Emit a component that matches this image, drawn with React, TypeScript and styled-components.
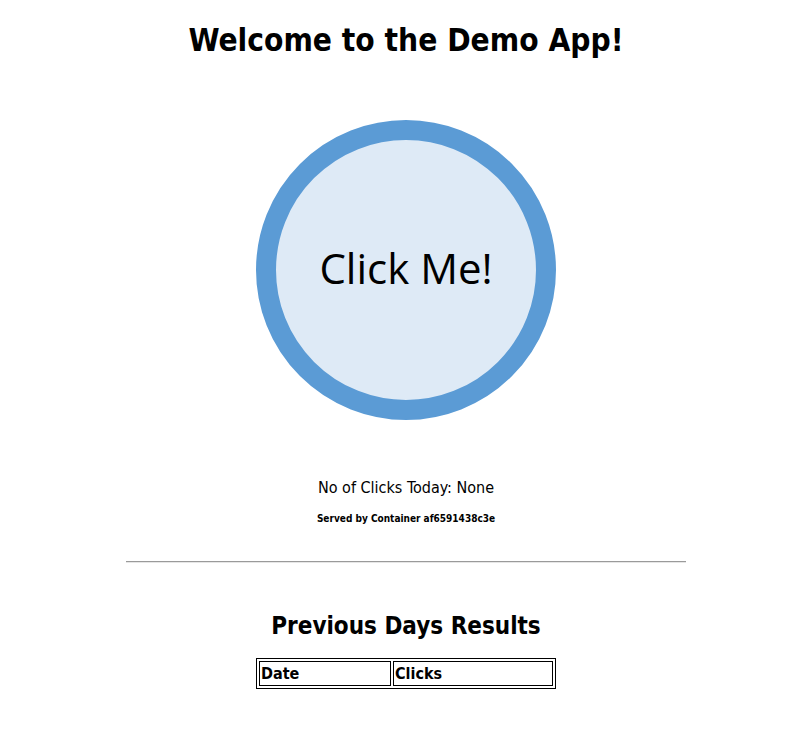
import React from "react";
import styled, { createGlobalStyle } from "styled-components";

const Global = createGlobalStyle`
  html, body { margin: 0; padding: 0; background: #fff; }
  body { font-family: "DejaVu Sans Condensed", "DejaVu Sans", sans-serif; color: #000; }
`;

const Page = styled.main`
  display: flex;
  flex-direction: column;
  align-items: center;
  width: 812px;
`;

const Title = styled.h1`
  margin: 21px 0 0;
  font-size: 31.4px;
  line-height: 38px;
  font-weight: bold;
`;

const CircleButton = styled.button`
  margin-top: 61px;
  width: 300px;
  height: 300px;
  border-radius: 50%;
  border: 20px solid #5b9bd5;
  background: #deeaf6;
  font-family: "Open Sans", "Noto Sans", sans-serif;
  font-size: 42px;
  color: #000;
  padding: 0 0 6px;
  cursor: pointer;
  display: flex;
  align-items: center;
  justify-content: center;
`;

const ClickCount = styled.p`
  margin: 58px 0 0;
  font-size: 16px;
  line-height: 20px;
`;

const ServedBy = styled.p`
  margin: 15px 0 0;
  font-size: 10px;
  font-weight: bold;
  line-height: 12px;
`;

const Rule = styled.hr`
  margin: 36px 0 0;
  width: 560px;
  border: 0;
  border-top: 1px solid #9a9a9a;
  border-bottom: 1px solid #e6e6e6;
  height: 0;
`;

const SubTitle = styled.h2`
  margin: 49px 0 0;
  font-size: 24px;
  line-height: 28px;
  font-weight: bold;
`;

const Results = styled.table`
  margin-top: 18px;
  width: 300px;
  border: 1px solid #000;
  border-spacing: 2px;
`;

const HeadCell = styled.th<{ $w?: number }>`
  border: 1px solid #000;
  text-align: left;
  font-size: 16px;
  font-weight: bold;
  padding: 1px;
  line-height: 21px;
  ${(p) => (p.$w ? `width: ${p.$w}px;` : "")}
`;

export default function App() {
  return (
    <>
      <Global />
      <Page>
        <Title>Welcome to the Demo App!</Title>
        <CircleButton>Click Me!</CircleButton>
        <ClickCount>No of Clicks Today: None</ClickCount>
        <ServedBy>Served by Container af6591438c3e</ServedBy>
        <Rule />
        <SubTitle>Previous Days Results</SubTitle>
        <Results>
          <thead>
            <tr>
              <HeadCell $w={128}>Date</HeadCell>
              <HeadCell>Clicks</HeadCell>
            </tr>
          </thead>
        </Results>
      </Page>
    </>
  );
}
